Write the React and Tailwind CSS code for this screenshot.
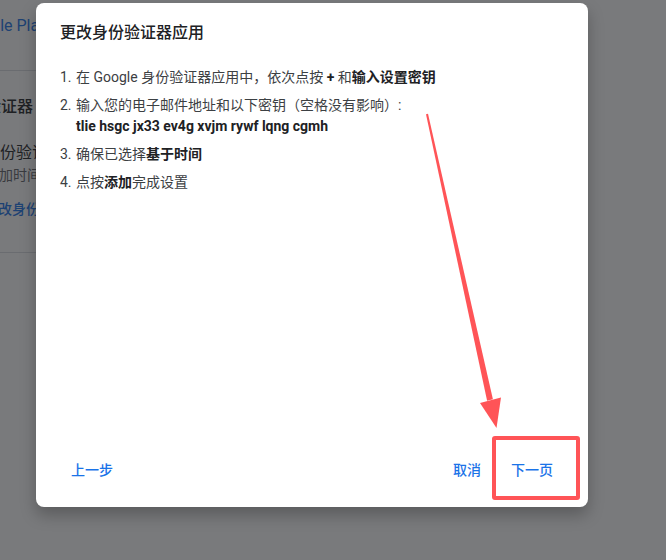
import React from "react";

const steps = [
  {
    n: "1.",
    body: (
      <>
        在 Google 身份验证器应用中，依次点按 <b className="font-bold text-[#202124]">+</b> 和
        <b className="font-bold text-[#202124]">输入设置密钥</b>
      </>
    ),
  },
  {
    n: "2.",
    body: (
      <>
        输入您的电子邮件地址和以下密钥（空格没有影响）:
        <br />
        <b className="font-bold text-[#202124]">tlie hsgc jx33 ev4g xvjm rywf lqng cgmh</b>
      </>
    ),
  },
  {
    n: "3.",
    body: (
      <>
        确保已选择<b className="font-bold text-[#202124]">基于时间</b>
      </>
    ),
  },
  {
    n: "4.",
    body: (
      <>
        点按<b className="font-bold text-[#202124]">添加</b>完成设置
      </>
    ),
  },
];

export default function App() {
  return (
    <div
      className="relative w-[666px] h-[560px] overflow-hidden bg-white"
      style={{ fontFamily: 'Roboto, "Noto Sans CJK SC", sans-serif' }}
    >
      {/* Page behind the dialog */}
      <div className="w-[300px] pt-[14px]">
        <div className="-ml-[38px] text-[16px] leading-[24px] text-[#1a73e8]">Google Play</div>
        <div className="mt-[32px] border-t border-[#dadce0]" />
        <div className="mt-[24px] -ml-[47px] text-[16px] leading-[24px] font-medium text-[#202124]">身份验证器</div>
        <div className="mt-[22px] -ml-[16px] text-[16px] leading-[24px] text-[#202124]">身份验证器应用</div>
        <div className="-ml-[1px] text-[14px] leading-[20px] text-[#5f6368]">加时间</div>
        <div className="mt-[14px] -ml-[16px] text-[14px] leading-[20px] font-medium text-[#1a73e8]">更改身份验证器应用</div>
        <div className="mt-[33px] border-t border-[#dadce0]" />
      </div>

      {/* Scrim */}
      <div className="absolute inset-0 bg-[rgba(32,33,36,0.6)]" />

      {/* Dialog */}
      <div className="absolute left-[36px] top-[3px] w-[552px] h-[504px] bg-white rounded-lg shadow-[0_8px_16px_rgba(0,0,0,0.25)] flex flex-col">
        <h2 className="pl-[24px] pt-[18px] text-[16px] leading-[24px] font-medium text-[#202124]">
          更改身份验证器应用
        </h2>

        <ol className="mt-[22px] pl-[24px] pr-[24px] flex flex-col gap-[7px] text-[14px] leading-[21px] text-[#3c4043]">
          {steps.map((s) => (
            <li key={s.n} className="flex">
              <span className="w-[16px] shrink-0">{s.n}</span>
              <span>{s.body}</span>
            </li>
          ))}
        </ol>

        <div className="mt-auto flex items-center px-[27px] pb-[19px]">
          <button className="h-[36px] px-[8px] text-[14px] font-medium text-[#1a73e8]">上一步</button>
          <div className="flex-1" />
          <div className="flex gap-[14px]">
            <button className="h-[36px] px-[8px] text-[14px] font-medium text-[#1a73e8]">取消</button>
            <button className="h-[36px] px-[8px] text-[14px] font-medium text-[#1a73e8]">下一页</button>
          </div>
        </div>
      </div>

      {/* Annotation: highlight box */}
      <div className="absolute left-[492px] top-[436px] w-[88px] h-[64px] border-4 border-[#ff5457] rounded-[3px]" />

      {/* Annotation: arrow */}
      <svg className="absolute inset-0 pointer-events-none" width="666" height="560" viewBox="0 0 666 560">
        <polygon points="426,114.2 428,113.8 492.9,399.3 487.1,400.7" fill="#ff5457" />
        <polygon points="480,403 501,397.5 496.5,428" fill="#ff5457" />
      </svg>
    </div>
  );
}
